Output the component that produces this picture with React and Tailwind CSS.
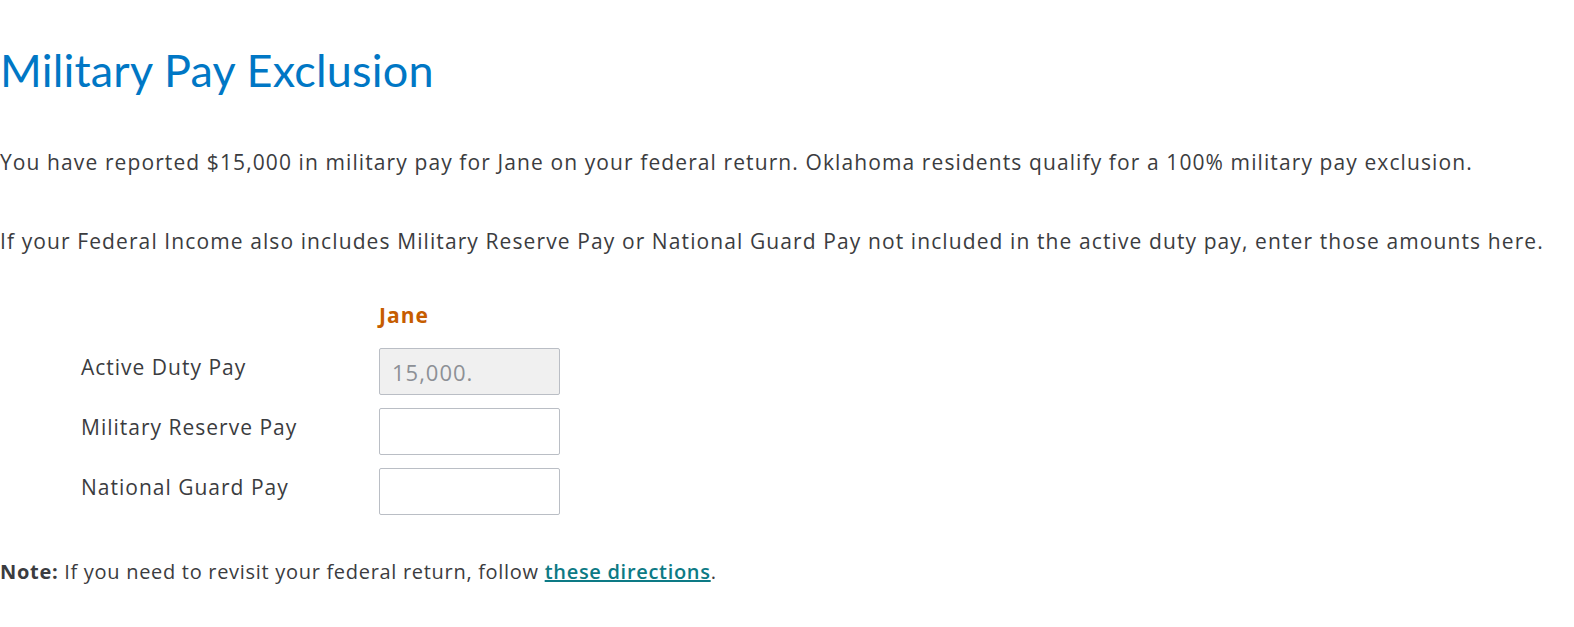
import React from 'react';

const rows = [
  { label: 'Active Duty Pay', value: '15,000.', readOnly: true },
  { label: 'Military Reserve Pay', value: '' },
  { label: 'National Guard Pay', value: '' },
];

const App = () => {
  return (
    <div className="min-h-[627px] bg-white text-[#3b3c40]" style={{ fontFamily: '"Open Sans", sans-serif' }}>
      <h1 className="pt-[42px] text-[45px] leading-[56px] tracking-[0.2px] text-[#0077c5] font-normal" style={{ fontFamily: 'Lato, sans-serif' }}>
        Military Pay Exclusion
      </h1>

      <p className="mt-[50px] text-[21px] leading-[28px] tracking-[1.1px]">
        You have reported $15,000 in military pay for Jane on your federal return. Oklahoma residents qualify for a 100% military pay exclusion.
      </p>
      <p className="mt-[51px] text-[21px] leading-[28px] tracking-[1.1px]">
        If your Federal Income also includes Military Reserve Pay or National Guard Pay not included in the active duty pay, enter those amounts here.
      </p>

      <div className="mt-[46px] pl-[81px]">
        <div className="flex">
          <div className="w-[298px]" />
          <span className="text-[21px] leading-[28px] font-bold tracking-[1px] text-[#c65d00]">Jane</span>
        </div>
        <div className="mt-[19px] flex flex-col gap-[13px]">
          {rows.map(row => (
            <div key={row.label} className="flex items-start">
              <label className="w-[298px] pt-[5px] text-[21px] leading-[28px] tracking-[1px]">{row.label}</label>
              <input
                type="text"
                readOnly={row.readOnly}
                defaultValue={row.value}
                className={`w-[181px] h-[47px] rounded-[2px] border border-[#babec5] px-[12px] text-[22px] tracking-[1px] outline-none ${row.readOnly ? 'bg-[#f0f0f0] text-[#8d9096]' : 'bg-white'}`}
              />
            </div>
          ))}
        </div>
      </div>

      <p className="mt-[43px] text-[20px] leading-[28px] tracking-[0.7px]">
        <span className="font-bold">Note:</span> If you need to revisit your federal return, follow{' '}
        <a href="#" className="font-semibold text-[#0d7a85] underline">these directions</a>.
      </p>
    </div>
  );
};

export default App;
